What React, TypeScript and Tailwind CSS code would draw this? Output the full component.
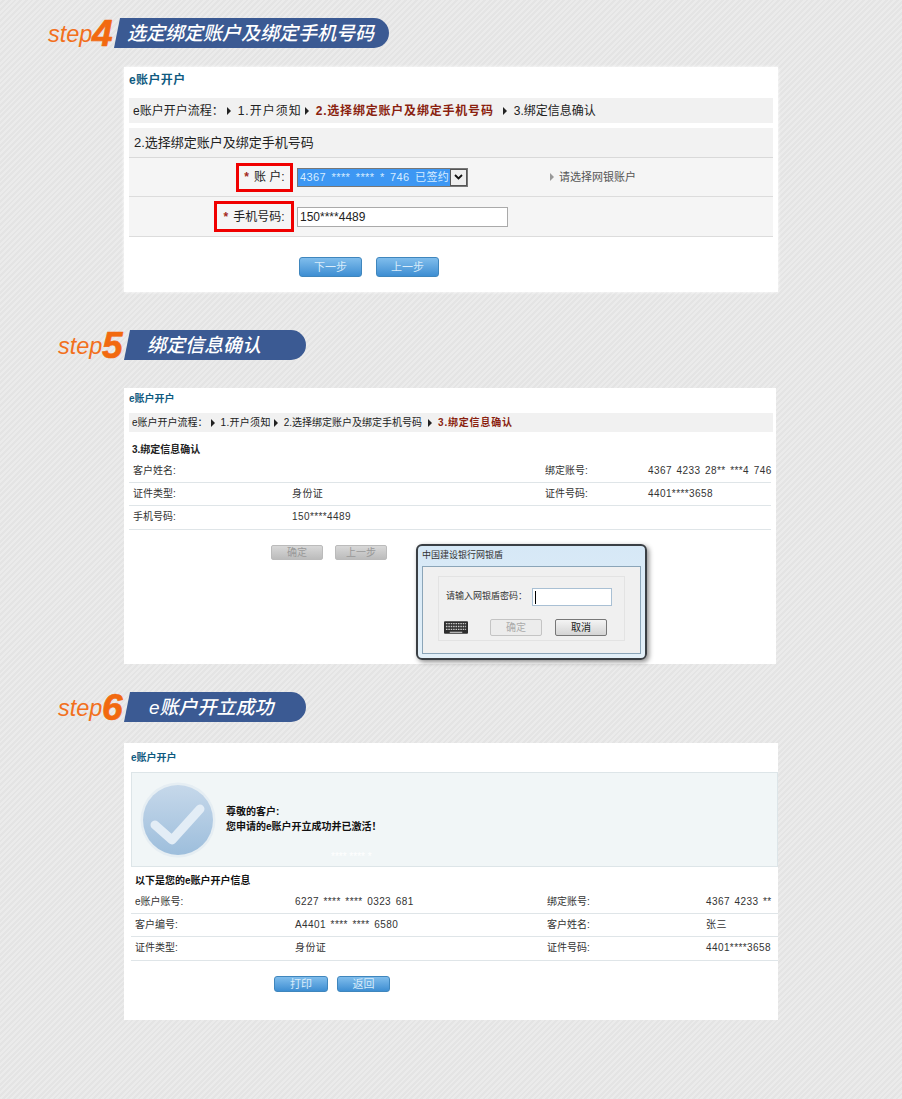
import type { ReactNode } from "react";

const font = "[font-family:'Liberation_Sans','Noto_Sans_CJK_SC',sans-serif]";

function StepHeader({ n, title, width, left, titleClass }: { n: number; title: string; width: string; left: string; titleClass: string }) {
  return (
    <div className={`flex h-[30px] items-center ${left}`}>
      <span className="w-[44px] pt-[4px] text-[23.5px] italic leading-none text-[#f2701d] [font-family:'Liberation_Sans',sans-serif]">step</span>
      <span className="w-[22px] text-[37px] font-bold italic leading-none text-[#f2690f] [-webkit-text-stroke:0.7px_#f2690f] [font-family:'Liberation_Sans',sans-serif]">{n}</span>
      <div className={`flex h-[30px] items-center rounded-r-[16px] bg-[#3b5a93] [clip-path:polygon(6px_0,100%_0,100%_100%,0_100%)] ${width}`}>
        <span className={`text-[19px] font-medium italic leading-none text-white ${titleClass}`}>{title}</span>
      </div>
    </div>
  );
}

function Flow({ items, active, size, arrow, itemClass }: { items: string[]; active: number; size: string; arrow: string; itemClass: string[] }) {
  return (
    <div className={`flex h-full items-center whitespace-nowrap text-[#222] ${size}`}>
      <span>e账户开户流程：</span>
      {items.map((t, i) => (
        <span key={t} className="flex items-center">
          <span className={`h-0 w-0 border-y-[4px] border-l-[4px] border-y-transparent border-l-[#222] ${arrow}`} />
          <span className={`${i === active ? "font-bold text-[#8a1f0f]" : ""} ${itemClass[i]}`}>{t}</span>
        </span>
      ))}
    </div>
  );
}

function BlueButton({ label, size }: { label: string; size: string }) {
  return (
    <button className={`flex items-center justify-center rounded-[3px] border border-[#3f86bd] bg-gradient-to-b from-[#7fbdec] to-[#3d8ed2] text-[11px] text-[#d9ecfa] ${size}`}>
      {label}
    </button>
  );
}

function GrayButton({ label }: { label: string }) {
  return (
    <button className="flex h-[15px] w-[52px] items-center justify-center rounded-[2px] border border-[#bbb] bg-gradient-to-b from-[#d8d8d8] to-[#bcbcbc] text-[10px] text-[#999]">
      {label}
    </button>
  );
}

function InfoRow({ cells, cols, height }: { cells: string[]; cols: string; height: string }) {
  return (
    <div className={`grid items-center border-b border-[#dfe5e8] pb-[2px] text-[10px] text-[#333] ${cols} ${height}`}>
      {cells.map((c, i) => (
        <span key={i} className={`whitespace-nowrap ${i % 2 === 1 ? "tracking-[0.4px] [word-spacing:1.5px]" : ""}`}>{c}</span>
      ))}
    </div>
  );
}

function Star() {
  return <span className="mr-[5px] font-bold text-[#a3281a]">*</span>;
}

function RedBox({ width, height, children }: { width: string; height: string; children: ReactNode }) {
  return (
    <div className={`flex items-center justify-center border-[3px] border-[#f00000] text-[12px] text-[#222] ${width} ${height}`}>
      {children}
    </div>
  );
}

function Keyboard() {
  return (
    <svg width="24" height="13" viewBox="0 0 25 13">
      <rect width="25" height="13" rx="1" fill="#2e2e2e" />
      {[2, 5, 8].map((y) => (
        <path key={y} d={`M2 ${y + 0.5}H23`} stroke="#c9c9c9" strokeWidth="1.4" strokeDasharray="1.6 0.9" />
      ))}
      <path d="M6 11.5H19" stroke="#c9c9c9" strokeWidth="1.2" />
    </svg>
  );
}

function BankDialog() {
  return (
    <div className="absolute left-[292px] top-[156px] h-[116px] w-[231px] rounded-[6px] border-2 border-[#3a3f44] bg-gradient-to-b from-[#d6e8f6] to-[#e3f0f9] px-[4px] shadow-[2px_2px_5px_rgba(0,0,0,0.45)]">
      <div className="flex h-[20px] items-center text-[9px] text-[#333]">中国建设银行网银盾</div>
      <div className="h-[88px] border border-[#8ba5b8] bg-[#f0f0f0] px-[15px] pt-[9px]">
        <div className="h-[65px] border border-[#e3e3e3] px-[5px]">
          <div className="flex h-[42px] items-start pt-[11px]">
            <span className="flex h-[17px] w-[88px] items-center whitespace-nowrap pl-[2px] text-[9px] text-[#333]">请输入网银盾密码：</span>
            <div className="flex h-[18px] w-[80px] items-center border border-[#a9c0d4] bg-white pl-[2px]">
              <span className="h-[13px] w-px bg-black" />
            </div>
          </div>
          <div className="flex items-center">
            <Keyboard />
            <button className="ml-[22px] h-[17px] w-[52px] rounded-[2px] border border-[#c4c4c4] bg-[#ececec] text-[10px] text-[#aaa]">确定</button>
            <button className="ml-[13px] h-[17px] w-[52px] rounded-[2px] border border-[#777] bg-gradient-to-b from-[#f4f4f4] to-[#d4d4d4] text-[10px] text-[#222]">取消</button>
          </div>
        </div>
      </div>
    </div>
  );
}

function SuccessIcon() {
  return (
    <svg width="76" height="76" viewBox="0 0 76 76" className="shrink-0">
      <defs>
        <linearGradient id="disc" x1="0" y1="0" x2="0" y2="1">
          <stop offset="0" stopColor="#c6d8ea" />
          <stop offset="1" stopColor="#9dbedc" />
        </linearGradient>
      </defs>
      <circle cx="38" cy="38" r="37.5" fill="#e6eef3" />
      <circle cx="38" cy="38" r="35" fill="url(#disc)" />
      <path d="M15 43L32 58L60 27" fill="none" stroke="#e3edf6" strokeWidth="9" strokeLinecap="round" strokeLinejoin="round" />
    </svg>
  );
}

const cols5 = "grid-cols-[159px_253px_103px_1fr] pl-[4px]";
const cols6 = "grid-cols-[160px_252px_159px_1fr] pl-[4px]";
const flowItems = ["1.开户须知", "2.选择绑定账户及绑定手机号码", "3.绑定信息确认"];

export default function App() {
  return (
    <div className={`h-[1099px] w-[902px] overflow-hidden bg-[#e8e8e8] bg-[repeating-linear-gradient(135deg,#ebebeb_0,#ebebeb_2px,#e4e4e4_2px,#e4e4e4_4px)] pt-[18px] ${font}`}>
      <StepHeader n={4} title="选定绑定账户及绑定手机号码" left="ml-[48px]" width="w-[275px]" titleClass="pl-[13px]" />

      {/* step 4 card */}
      <div className="ml-[124px] mt-[19px] h-[225px] w-[654px] bg-white px-[5px] shadow-[0_0_3px_rgba(255,255,255,0.9)]">
        <div className="flex h-[31px] items-center pb-[5px] text-[12px] font-bold tracking-[0.4px] text-[#0f5a80]">e账户开户</div>
        <div className="h-[25px] bg-[#f1f1f1] pl-[4px]">
          <Flow
            items={flowItems}
            active={1}
            size="text-[12px]"
            arrow="ml-[3px] mr-[7px]"
            itemClass={["tracking-[1px]", "mr-[6px] tracking-[0.8px]", ""]}
          />
        </div>
        <div className="mt-[5px] flex h-[30px] items-center border-b border-[#d9d9d9] bg-[#f2f2f2] pl-[5px] text-[13px] text-[#222]">2.选择绑定账户及绑定手机号码</div>
        <div className="flex h-[39px] items-center border-b border-[#dcdcdc] bg-[#f5f5f5]">
          <div className="flex w-[164px] justify-end">
            <RedBox width="w-[57px]" height="h-[29px]"><Star />账 户:</RedBox>
          </div>
          <div className="ml-[4px] flex h-[19px] w-[171px] items-center border border-[#777] bg-[#3d97f3] pl-[2px] text-[11px] text-[#d6ecff]">
            <span className="flex-1 whitespace-nowrap tracking-[0.4px] [word-spacing:2px]">4367 **** **** * 746 已签约</span>
            <span className="flex h-[17px] w-[17px] items-center justify-center border border-[#555] bg-[#eee] text-[#111]">
              <svg width="9" height="6" viewBox="0 0 9 6"><path d="M1 1L4.5 4.5L8 1" fill="none" stroke="#111" strokeWidth="1.8" /></svg>
            </span>
          </div>
          <span className="ml-[82px] mr-[5px] h-0 w-0 border-y-[4px] border-l-[4px] border-y-transparent border-l-[#999]" />
          <span className="text-[11px] text-[#555]">请选择网银账户</span>
        </div>
        <div className="flex h-[40px] items-center border-b border-[#dcdcdc] bg-[#f5f5f5]">
          <div className="flex w-[165px] justify-end">
            <RedBox width="w-[80px]" height="h-[31px]"><Star />手机号码:</RedBox>
          </div>
          <div className="ml-[3px] flex h-[20px] w-[211px] items-center border border-[#aaa] bg-white pl-[2px] text-[12px] text-[#222]">150****4489</div>
        </div>
        <div className="ml-[170px] mt-[20px] flex gap-[14px]">
          <BlueButton label="下一步" size="h-[20px] w-[63px]" />
          <BlueButton label="上一步" size="h-[20px] w-[63px]" />
        </div>
      </div>

      <div className="mt-[38px]">
        <StepHeader n={5} title="绑定信息确认" left="ml-[58px]" width="w-[182px]" titleClass="pl-[23px]" />
      </div>

      {/* step 5 card */}
      <div className="relative ml-[124px] mt-[28px] h-[276px] w-[652px] bg-white px-[5px] text-[10px]">
        <div className="flex h-[25px] items-center pb-[4px] text-[10px] font-bold text-[#0f5a80]">e账户开户</div>
        <div className="h-[19px] w-[644px] bg-[#f1f1f1] pl-[3px]">
          <Flow
            items={flowItems}
            active={2}
            size="text-[10px]"
            arrow="ml-[3px] mr-[6px]"
            itemClass={["tracking-[0.3px]", "mr-[3px]", "tracking-[0.8px]"]}
          />
        </div>
        <div className="flex h-[28px] items-center pl-[3px] pt-[6px] text-[10px] font-bold text-[#222]">3.绑定信息确认</div>
        <InfoRow cols={cols5} height="h-[23px]" cells={["客户姓名:", "", "绑定账号:", "4367 4233 28** ***4 746"]} />
        <InfoRow cols={cols5} height="h-[23px]" cells={["证件类型:", "身份证", "证件号码:", "4401****3658"]} />
        <InfoRow cols={cols5} height="h-[24px]" cells={["手机号码:", "150****4489", "", ""]} />
        <div className="ml-[142px] mt-[15px] flex gap-[12px]">
          <GrayButton label="确定" />
          <GrayButton label="上一步" />
        </div>
        <BankDialog />
      </div>

      <div className="mt-[28px]">
        <StepHeader n={6} title="e账户开立成功" left="ml-[58px]" width="w-[182px]" titleClass="pl-[25px]" />
      </div>

      {/* step 6 card */}
      <div className="ml-[124px] mt-[21px] h-[277px] w-[654px] bg-white pl-[7px] text-[10px]">
        <div className="flex h-[29px] items-center text-[10px] font-bold text-[#0f5a80]">e账户开户</div>
        <div className="relative flex h-[95px] items-center border border-[#dde5e8] bg-[#f1f6f7] pl-[8px]">
          <SuccessIcon />
          <div className="ml-[10px] mt-[-1px] text-[10px] font-bold leading-[15px] text-[#111]">
            <div>尊敬的客户:</div>
            <div>您申请的e账户开立成功并已激活！</div>
          </div>
          <span className="absolute left-[199px] top-[76px] text-[10px] text-white">**** **** *</span>
        </div>
        <div className="flex h-[24px] items-center pl-[4px] pt-[3px] text-[10px] font-bold text-[#111]">以下是您的e账户开户信息</div>
        <InfoRow cols={cols6} height="h-[23px]" cells={["e账户账号:", "6227 **** **** 0323 681", "绑定账号:", "4367 4233 **"]} />
        <InfoRow cols={cols6} height="h-[23px]" cells={["客户编号:", "A4401 **** **** 6580", "客户姓名:", "张三"]} />
        <InfoRow cols={cols6} height="h-[24px]" cells={["证件类型:", "身份证", "证件号码:", "4401****3658"]} />
        <div className="ml-[143px] mt-[15px] flex gap-[9px]">
          <BlueButton label="打印" size="h-[16px] w-[54px]" />
          <BlueButton label="返回" size="h-[16px] w-[53px]" />
        </div>
      </div>
    </div>
  );
}
